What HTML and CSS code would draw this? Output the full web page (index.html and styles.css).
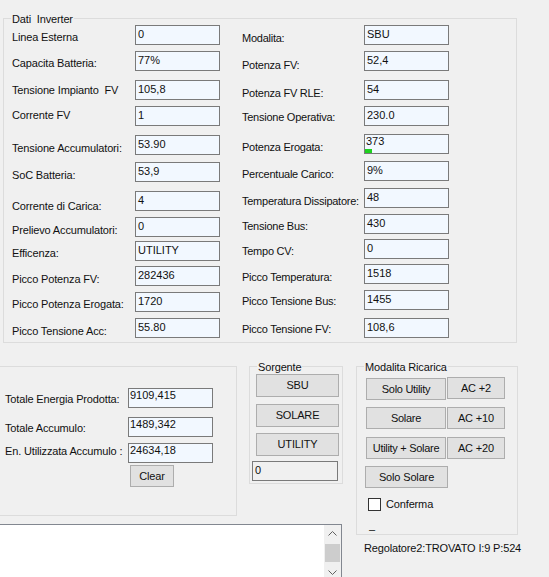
FILE: index.html
```html
<!DOCTYPE html>
<html lang="it">
<head>
<meta charset="utf-8">
<title>Dati Inverter</title>
<link rel="stylesheet" href="styles.css">
</head>
<body>
<div class="page">
  <div class="group inverter">
    <span class="gtitle">Dati&nbsp; Inverter</span>
    <div class="cols">
      <div class="col col-left">
        <div class="row"><span class="lab p6">Linea Esterna</span><span class="tb">0</span></div>
        <div class="row"><span class="lab p6">Capacita Batteria:</span><span class="tb">77%</span></div>
        <div class="row"><span class="lab p4">Tensione Impianto&nbsp; FV</span><span class="tb">105,8</span></div>
        <div class="row"><span class="lab p3">Corrente FV</span><span class="tb">1</span></div>
        <div class="row"><span class="lab p7">Tensione Accumulatori:</span><span class="tb">53.90</span></div>
        <div class="row"><span class="lab p7">SoC Batteria:</span><span class="tb">53,9</span></div>
        <div class="row"><span class="lab p9">Corrente di Carica:</span><span class="tb">4</span></div>
        <div class="row"><span class="lab p7">Prelievo Accumulatori:</span><span class="tb">0</span></div>
        <div class="row"><span class="lab p6">Efficenza:</span><span class="tb">UTILITY</span></div>
        <div class="row"><span class="lab p7">Picco Potenza FV:</span><span class="tb">282436</span></div>
        <div class="row"><span class="lab p6">Picco Potenza Erogata:</span><span class="tb">1720</span></div>
        <div class="row"><span class="lab p7">Picco Tensione Acc:</span><span class="tb">55.80</span></div>
      </div>
      <div class="col col-right">
        <div class="row"><span class="lab p7">Modalita:</span><span class="tb">SBU</span></div>
        <div class="row"><span class="lab p8">Potenza FV:</span><span class="tb">52,4</span></div>
        <div class="row"><span class="lab p7">Potenza FV RLE:</span><span class="tb">54</span></div>
        <div class="row"><span class="lab p5">Tensione Operativa:</span><span class="tb">230.0</span></div>
        <div class="row"><span class="lab p7">Potenza Erogata:</span><span class="tb tight meter">373<span class="bar" style="width:7px"></span></span></div>
        <div class="row"><span class="lab p7">Percentuale Carico:</span><span class="tb">9%</span></div>
        <div class="row"><span class="lab p7">Temperatura Dissipatore:</span><span class="tb">48</span></div>
        <div class="row"><span class="lab p6">Tensione Bus:</span><span class="tb">430</span></div>
        <div class="row"><span class="lab p6">Tempo CV:</span><span class="tb">0</span></div>
        <div class="row"><span class="lab p7">Picco Temperatura:</span><span class="tb">1518</span></div>
        <div class="row"><span class="lab p5">Picco Tensione Bus:</span><span class="tb">1455</span></div>
        <div class="row"><span class="lab p5">Picco Tensione FV:</span><span class="tb">108,6</span></div>
      </div>
    </div>
  </div>

  <div class="bottom">
    <div class="bcol-left">
      <div class="brow">
        <div class="group totals">
          <div class="trows">
            <div class="row"><span class="lab p5">Totale Energia Prodotta:</span><span class="tb tight">9109,415</span></div>
            <div class="row"><span class="lab p5">Totale Accumulo:</span><span class="tb tight">1489,342</span></div>
            <div class="row"><span class="lab p2">En. Utilizzata Accumulo :</span><span class="tb tight">24634,18</span></div>
          </div>
          <div class="btn clear">Clear</div>
        </div>
        <div class="group sorgente">
          <span class="gtitle">Sorgente</span>
          <div class="btn src">SBU</div>
          <div class="btn src">SOLARE</div>
          <div class="btn src">UTILITY</div>
          <span class="tb ro">0</span>
        </div>
      </div>
      <div class="log">
        <div class="sbar">
          <div class="arrow"><svg width="9" height="5" viewBox="0 0 9 5"><polyline points="0.5,4.5 4.5,0.5 8.5,4.5" fill="none" stroke="#606060" stroke-width="1"/></svg></div>
          <div class="track"><div class="thumb"></div></div>
          <div class="arrow"><svg width="9" height="5" viewBox="0 0 9 5"><polyline points="0.5,0.5 4.5,4.5 8.5,0.5" fill="none" stroke="#606060" stroke-width="1"/></svg></div>
        </div>
      </div>
    </div>
    <div class="bcol-right">
      <div class="group ricarica">
        <span class="gtitle">Modalita Ricarica</span>
        <div class="rrow"><div class="btn wide">Solo Utility</div><div class="btn ac up1">AC +2</div></div>
        <div class="rrow"><div class="btn wide">Solare</div><div class="btn ac">AC +10</div></div>
        <div class="rrow"><div class="btn wide">Utility + Solare</div><div class="btn ac">AC +20</div></div>
        <div class="btn solo">Solo Solare</div>
        <label class="chk"><span class="box"></span><span>Conferma</span></label>
        <div class="dash">–</div>
      </div>
      <div class="status">Regolatore2:TROVATO I:9 P:524</div>
    </div>
  </div>
</div>
</body>
</html>
```
FILE: styles.css
```css
html, body {
  margin: 0;
  padding: 0;
}
body {
  background: #f0f0f0;
  color: #111;
  font-family: "Liberation Sans", Arial, sans-serif;
  font-size: 11px;
  line-height: 13px;
  letter-spacing: -0.15px;
  width: 549px;
  height: 577px;
  overflow: hidden;
}
.page {
  width: 549px;
  height: 577px;
  overflow: hidden;
}
.group {
  position: relative;
  box-sizing: border-box;
  border: 1px solid #dcdcdc;
}
.gtitle {
  position: absolute;
  top: -6px;
  left: 7px;
  padding: 0 1px;
  background: #f0f0f0;
  white-space: nowrap;
}
.inverter {
  margin: 18px 0 0 3px;
  width: 514px;
  height: 325px;
  padding: 6px 0 0 8px;
}
.cols {
  display: flex;
  gap: 22px;
}
.col {
  display: grid;
}
.col-left {
  width: 208px;
  grid-template-rows: 26px 29px 26px 29px 27px 29px 26px 24px 25px 26px 26px 20px;
}
.col-right {
  width: 207px;
  grid-template-rows: 26px 29px 26px 28px 27px 27px 26px 25px 25px 26px 28px 20px;
}
.row {
  display: flex;
  align-items: flex-start;
}
.lab {
  white-space: nowrap;
  flex: none;
}
.col-left .lab { width: 123px; }
.col-right .lab { width: 122px; letter-spacing: -0.25px; }
.p2 { padding-top: 2px; }
.p3 { padding-top: 3px; }
.p4 { padding-top: 4px; }
.p5 { padding-top: 5px; }
.p6 { padding-top: 6px; }
.p7 { padding-top: 7px; }
.p8 { padding-top: 8px; }
.p9 { padding-top: 9px; }
.tb {
  flex: none;
  display: block;
  box-sizing: border-box;
  width: 85px;
  height: 20px;
  border: 1px solid #7a7a7a;
  background: #f2f8ff;
  padding: 2px 2px 0;
  white-space: nowrap;
  overflow: hidden;
  letter-spacing: 0;
}
.tb.tight {
  padding: 0 1px;
}
.meter {
  position: relative;
  padding-left: 0;
}
.bar {
  position: absolute;
  left: 0;
  bottom: 0;
  height: 4px;
  background: #1fd11f;
}
.bottom {
  display: flex;
  align-items: flex-start;
  margin-top: 23px;
}
.bcol-left {
  margin-left: -5px;
  width: 348px;
  flex: none;
}
.brow {
  display: flex;
  align-items: flex-start;
}
.totals {
  width: 242px;
  height: 150px;
  padding: 21px 0 0 9px;
}
.trows {
  display: grid;
  grid-template-rows: 29px 26px 20px;
}
.totals .lab { width: 123px; }
.btn {
  display: flex;
  align-items: center;
  justify-content: center;
  box-sizing: border-box;
  border: 1px solid #adadad;
  background: #e1e1e1;
  white-space: nowrap;
}
.clear {
  margin: 2px 0 0 125px;
  width: 44px;
  height: 22px;
}
.sorgente {
  margin-left: 12px;
  width: 94px;
  height: 118px;
  padding: 7px 0 0 6px;
}
.src {
  width: 83px;
  height: 23px;
  margin-bottom: 7px;
}
.src + .src + .src {
  margin-bottom: 5px;
}
.sorgente .src:nth-of-type(2) {
  margin-bottom: 6px;
}
.tb.ro {
  margin-left: -4px;
  width: 86px;
  background: #f0f0f0;
  padding: 2px 2px 0;
}
.log {
  margin-top: 8px;
  width: 347px;
  height: 58px;
  box-sizing: border-box;
  border: 1px solid #828790;
  background: #fff;
  display: flex;
  justify-content: flex-end;
}
.sbar {
  width: 17px;
  background: #f0f0f0;
  display: flex;
  flex-direction: column;
}
.arrow {
  height: 17px;
  display: flex;
  align-items: center;
  justify-content: center;
  flex: none;
}
.track {
  flex: 1;
  padding: 2px 1px 0;
}
.thumb {
  height: 18px;
  background: #cdcdcd;
}
.bcol-right {
  margin-left: 13px;
  flex: none;
}
.ricarica {
  width: 162px;
  height: 169px;
  padding: 11px 0 0 9px;
}
.rrow {
  display: flex;
  gap: 1px;
  margin-bottom: 7px;
}
.rrow + .rrow {
  margin-bottom: 8px;
}
.rrow + .rrow + .rrow {
  margin-bottom: 7px;
}
.wide {
  width: 80px;
  height: 22px;
  letter-spacing: -0.3px;
}
.ac {
  width: 58px;
  height: 22px;
}
.up1 {
  margin-top: -1px;
  height: 22px;
}
.solo {
  margin-left: -1px;
  width: 83px;
  height: 22px;
}
.chk {
  display: flex;
  align-items: center;
  gap: 5px;
  margin: 10px 0 0 2px;
  height: 13px;
}
.chk .box {
  width: 13px;
  height: 13px;
  box-sizing: border-box;
  border: 1px solid #333;
  background: #fff;
  flex: none;
}
.dash {
  margin: 12px 0 0 3px;
}
.status {
  margin: 7px 0 0 8px;
  white-space: nowrap;
}
```
